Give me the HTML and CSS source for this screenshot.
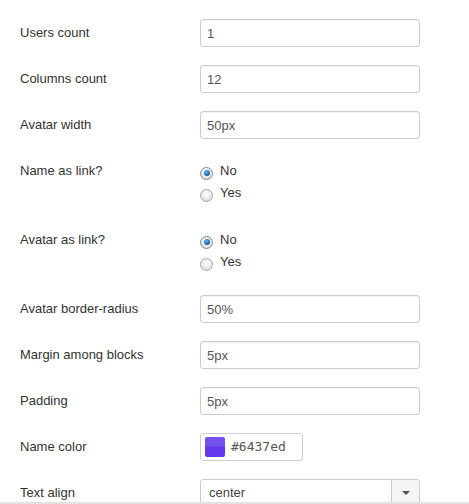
FILE: index.html
```html
<!DOCTYPE html>
<html>
<head>
<meta charset="utf-8">
<link rel="stylesheet" href="styles.css">
</head>
<body>
<form class="form">
  <div class="row"><label class="lbl">Users count</label><input class="txt" type="text" value="1"></div>
  <div class="row"><label class="lbl">Columns count</label><input class="txt" type="text" value="12"></div>
  <div class="row"><label class="lbl">Avatar width</label><input class="txt" type="text" value="50px"></div>
  <div class="row"><label class="lbl">Name as link?</label>
    <div class="radios">
      <div class="radio"><span class="dot on"></span>No</div>
      <div class="radio"><span class="dot"></span>Yes</div>
    </div>
  </div>
  <div class="row"><label class="lbl">Avatar as link?</label>
    <div class="radios">
      <div class="radio"><span class="dot on"></span>No</div>
      <div class="radio"><span class="dot"></span>Yes</div>
    </div>
  </div>
  <div class="row"><label class="lbl">Avatar border-radius</label><input class="txt" type="text" value="50%"></div>
  <div class="row"><label class="lbl">Margin among blocks</label><input class="txt" type="text" value="5px"></div>
  <div class="row"><label class="lbl">Padding</label><input class="txt" type="text" value="5px"></div>
  <div class="row"><label class="lbl">Name color</label>
    <div class="color"><span class="swatch"></span><span class="hex">#6437ed</span></div>
  </div>
  <div class="row"><label class="lbl">Text align</label>
    <div class="select"><span class="val">center</span><span class="arrow"><span class="caret"></span></span></div>
  </div>
</form>
<div class="bottombar"></div>
</body>
</html>
```
FILE: styles.css
```css
html, body {
  margin: 0;
  padding: 0;
  background: #fff;
}
body {
  font-family: "Liberation Sans", Arial, sans-serif;
  font-size: 13px;
  line-height: 18px;
  color: #333;
  overflow: hidden;
}
.form {
  display: flex;
  flex-direction: column;
  gap: 18px;
  padding: 19px 0 0 20px;
}
.row {
  display: flex;
  align-items: flex-start;
}
.lbl {
  width: 180px;
  flex: none;
  padding-top: 5px;
  line-height: 18px;
}
.txt {
  box-sizing: border-box;
  width: 220px;
  height: 28px;
  margin: 0;
  border: 1px solid #ccc;
  border-radius: 3px;
  padding: 4px 6px;
  font-family: "Liberation Sans", Arial, sans-serif;
  font-size: 13px;
  color: #555;
  background: #fff;
  box-shadow: inset 0 1px 1px rgba(0,0,0,0.06);
  outline: none;
}
.radios {
  display: flex;
  flex-direction: column;
  gap: 4px;
  padding-top: 5px;
  min-height: 46px;
}
.radio {
  display: flex;
  align-items: center;
  height: 18px;
}
.dot {
  box-sizing: border-box;
  width: 13px;
  height: 13px;
  margin-top: 4px;
  margin-right: 7px;
  border-radius: 50%;
  border: 1px solid #a6a6a6;
  background: radial-gradient(circle at 50% 35%, #fdfdfd 0%, #e6e6e6 60%, #d2d2d2 100%);
  position: relative;
}
.dot.on {
  border-color: #7a8a99;
}
.dot.on::after {
  content: "";
  position: absolute;
  left: 2.5px;
  top: 2.5px;
  width: 6px;
  height: 6px;
  border-radius: 50%;
  background: radial-gradient(circle at 40% 35%, #6fb8f0 0%, #1f6fb5 55%, #0e3f73 100%);
}
.color {
  box-sizing: border-box;
  width: 103px;
  height: 28px;
  border: 1px solid #ccc;
  border-radius: 3px;
  display: flex;
  align-items: center;
  padding: 0 4px;
  gap: 6px;
}
.swatch {
  width: 20px;
  height: 20px;
  border-radius: 2px;
  background: linear-gradient(#7352f0 0%, #7352f0 45%, #6437ed 50%, #6437ed 100%);
}
.hex {
  font-family: "DejaVu Sans Mono", "Liberation Mono", monospace;
  font-size: 13px;
  color: #555;
}
.select {
  box-sizing: border-box;
  width: 220px;
  height: 28px;
  border: 1px solid #ccc;
  border-radius: 3px;
  display: flex;
  align-items: stretch;
  overflow: hidden;
}
.val {
  flex: 1;
  display: flex;
  align-items: center;
  padding-left: 8px;
  color: #444;
}
.arrow {
  width: 27px;
  border-left: 1px solid #ccc;
  background: #f5f5f5;
  display: flex;
  align-items: center;
  justify-content: center;
}
.caret {
  width: 0;
  height: 0;
  border-left: 4px solid transparent;
  border-right: 4px solid transparent;
  border-top: 4px solid #555;
}
.bottombar {
  position: fixed;
  left: 0;
  right: 0;
  bottom: 0;
  height: 2px;
  background: #e2e2e2;
}
```
